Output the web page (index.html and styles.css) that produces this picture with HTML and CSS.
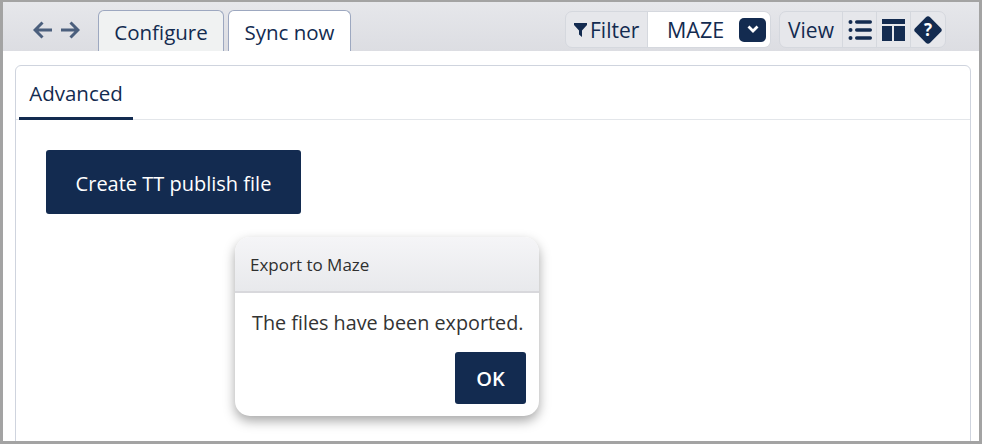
FILE: index.html
```html
<!DOCTYPE html>
<html lang="en">
<head>
    <meta charset="UTF-8">
    <title>Export to Maze</title>
    <link rel="stylesheet" href="styles.css">
</head>
<body>
<div class="frame">

    <!-- Toolbar -->
    <div class="toolbar">
        <div class="nav-arrows">
            <svg width="19" height="18" viewBox="0 0 19 18"><path d="M9.500 1.500 2 9 9.500 16.500M2.500 9H19" class="arrow-line"/></svg>
            <svg width="19" height="18" viewBox="0 0 19 18"><path d="M9.500 1.500 17 9 9.500 16.500M16.500 9H0" class="arrow-line"/></svg>
        </div>
        <div class="tab">Configure</div>
        <div class="tab tab-active">Sync now</div>

        <div class="filter-group">
            <div class="filter-label">
                <svg width="13" height="14" viewBox="0 0 13 14"><path d="M0 0h13v2L8 7.500V14L5 11.500V7.500L0 2z" class="icon-fill"/></svg>
                Filter
            </div>
            <div class="filter-select">
                <span>MAZE</span>
                <div class="select-btn">
                    <svg width="14" height="9" viewBox="0 0 14 9"><path d="M2.500 1.500 7 6 11.500 1.500" class="chevron"/></svg>
                </div>
            </div>
        </div>

        <div class="view-group">
            <div class="view-label">View</div>
            <div class="view-icon">
                <svg width="24" height="22" viewBox="0 0 24 22">
                    <circle cx="2.500" cy="3" r="2" class="icon-fill"/>
                    <circle cx="2.500" cy="11" r="2" class="icon-fill"/>
                    <circle cx="2.500" cy="19" r="2" class="icon-fill"/>
                    <rect x="7" y="1.300" width="17" height="3.400" rx="1.700" class="icon-fill"/>
                    <rect x="7" y="9.300" width="17" height="3.400" rx="1.700" class="icon-fill"/>
                    <rect x="7" y="17.300" width="17" height="3.400" rx="1.700" class="icon-fill"/>
                </svg>
            </div>
            <div class="view-icon">
                <svg width="23" height="22" viewBox="0 0 23 22"><path d="M0 0h23v5H0zM0 7h10v15H0zM12 7h11v15H12z" class="icon-fill"/></svg>
            </div>
            <div class="view-icon view-icon-last">
                <svg width="32" height="32" viewBox="0 0 32 32">
                    <rect x="5.500" y="5.500" width="21" height="21" rx="3" transform="rotate(45 16 16)" class="icon-fill"/>
                    <text x="16" y="22" class="help-mark">?</text>
                </svg>
            </div>
        </div>
    </div>

    <!-- Panel -->
    <div class="content">
        <div class="panel">
            <div class="panel-tabs">
                <div class="panel-tab">Advanced</div>
            </div>
            <div class="panel-body">
                <button class="btn-publish">Create TT publish file</button>
            </div>
        </div>
    </div>

    <!-- Dialog -->
    <div class="dialog">
        <div class="dialog-title">Export to Maze</div>
        <div class="dialog-body">
            <p class="dialog-text">The files have been exported.</p>
            <div class="dialog-actions">
                <button class="btn-ok">OK</button>
            </div>
        </div>
    </div>

</div>
</body>
</html>
```
FILE: styles.css
```css
* {
    box-sizing: border-box;
}

html, body {
    margin: 0;
    padding: 0;
}

body {
    font-family: "Open Sans", "Noto Sans", sans-serif;
    color: #132b50;
    background-color: white;
}

.frame {
    position: relative;
    width: 982px;
    height: 444px;
    overflow: hidden;
    border-top: 2px solid #a3a3a3;
    border-left: 3px solid #a3a3a3;
    border-right: 3px solid #a3a3a3;
    border-bottom: 3px solid #a3a3a3;
    background-color: white;
}

.toolbar {
    display: flex;
    align-items: flex-end;
    height: 49px;
    padding-left: 30px;
    background: linear-gradient(#e6e7eb, #dcdde2);
}

.nav-arrows {
    display: flex;
    gap: 9px;
    align-self: flex-start;
    margin-top: 19px;
    margin-right: 18px;
}

.arrow-line {
    fill: none;
    stroke: #4b5f7d;
    stroke-width: 3;
}

.tab {
    width: 126px;
    height: 41px;
    margin-right: 4px;
    padding-top: 6px;
    text-align: center;
    font-size: 20.500px;
    font-weight: 500;
    line-height: 30px;
    color: #132b50;
    background-color: #f0f2f2;
    border: 1px solid #9da8c0;
    border-bottom: none;
    border-radius: 6px 6px 0 0;
}

.tab-active {
    width: 123px;
    margin-right: 5px;
    background-color: white;
}

.icon-fill {
    fill: #132b50;
}

.filter-group {
    display: flex;
    align-self: flex-start;
    height: 37px;
    margin-top: 9px;
    margin-left: 209px;
    background-color: #e6e7eb;
    border: 1px solid #d5d8de;
    border-radius: 7px;
}

.filter-label {
    display: flex;
    align-items: center;
    gap: 3px;
    width: 82px;
    padding-left: 8px;
    font-size: 21px;
    font-weight: 500;
    border-right: 1px solid #d5d8de;
}

.filter-select {
    display: flex;
    align-items: center;
    width: 122px;
    padding-left: 19px;
    font-size: 21.500px;
    font-weight: 500;
    background-color: white;
    border-radius: 0 6px 6px 0;
}

.filter-select span {
    width: 72px;
}

.select-btn {
    display: flex;
    align-items: center;
    justify-content: center;
    width: 27px;
    height: 24px;
    background-color: #132b50;
    border-radius: 5px;
}

.chevron {
    fill: none;
    stroke: white;
    stroke-width: 2.800;
}

.view-group {
    display: flex;
    align-self: flex-start;
    height: 37px;
    margin-top: 9px;
    margin-left: 8px;
    background-color: #e6e7eb;
    border: 1px solid #d5d8de;
    border-radius: 7px;
}

.view-label {
    width: 63px;
    padding-top: 2px;
    text-align: center;
    font-size: 21px;
    font-weight: 500;
    line-height: 32px;
    border-right: 1px solid #d5d8de;
}

.view-icon {
    display: flex;
    align-items: center;
    justify-content: center;
    width: 34px;
    border-right: 1px solid #d5d8de;
}

.view-icon-last {
    border-right: none;
}

.help-mark {
    fill: white;
    font-size: 17px;
    font-weight: 700;
    text-anchor: middle;
}

.content {
    padding: 14px 8px 0 12px;
}

.panel {
    height: 400px;
    background-color: white;
    border: 1px solid #cfd4de;
    border-radius: 6px;
}

.panel-tabs {
    display: flex;
    height: 54px;
    padding-left: 3px;
    border-bottom: 1px solid #e3e6ea;
}

.panel-tab {
    width: 114px;
    height: 54px;
    padding-top: 11px;
    text-align: center;
    font-size: 20.500px;
    font-weight: 500;
    line-height: 32px;
    color: #132b50;
    border-bottom: 3px solid #132b50;
}

.panel-body {
    padding: 30px;
}

.btn-publish {
    display: block;
    width: 255px;
    height: 64px;
    padding-top: 3px;
    font-family: inherit;
    font-size: 20px;
    color: white;
    background-color: #132b50;
    border: none;
    border-radius: 3px;
}

.dialog {
    position: absolute;
    left: 232px;
    top: 235px;
    width: 304px;
    height: 179px;
    background-color: white;
    border-radius: 15px;
    box-shadow: 0 5px 12px rgba(0, 0, 0, 0.35);
    overflow: hidden;
}

.dialog-title {
    height: 56px;
    padding: 16px 15px 0;
    font-size: 17px;
    line-height: 24px;
    color: #2f2f2f;
    background: linear-gradient(#f5f5f7, #e8e9ec);
    border-bottom: 2px solid #d8d8dc;
}

.dialog-body {
    padding: 15px 13px 0 17px;
}

.dialog-text {
    margin: 0;
    font-size: 19.800px;
    line-height: 30px;
    white-space: nowrap;
    color: #333333;
}

.dialog-actions {
    display: flex;
    justify-content: flex-end;
    margin-top: 14px;
}

.btn-ok {
    width: 71px;
    height: 52px;
    font-family: inherit;
    font-size: 20px;
    font-weight: 600;
    color: white;
    background-color: #132b50;
    border: none;
    border-radius: 3px;
}
```
